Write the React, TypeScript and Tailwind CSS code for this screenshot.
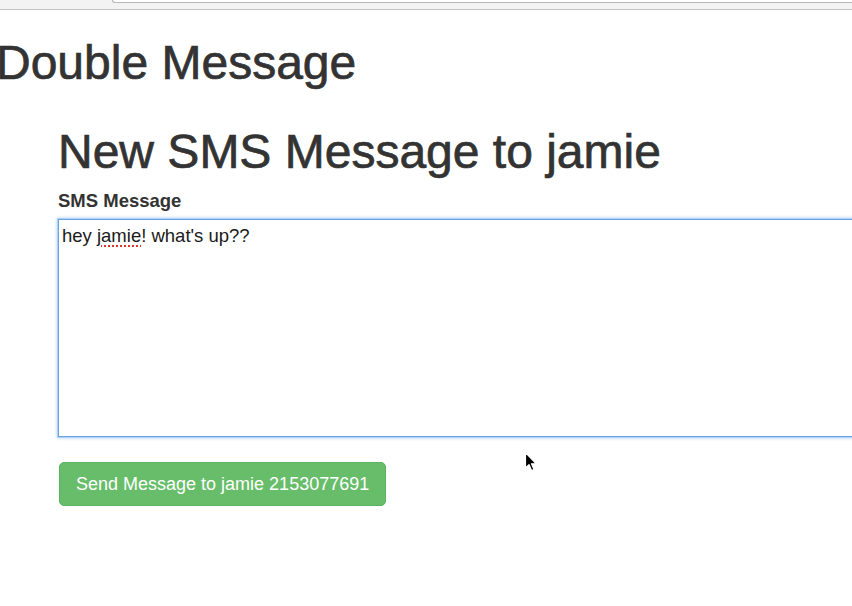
export default function App() {
  return (
    <div className="relative h-[606px] w-[852px] overflow-hidden bg-white font-['Liberation_Sans',Arial,sans-serif] text-[#333]">
      {/* browser chrome strip */}
      <div className="relative h-[10px] border-b border-[#c2c2c2] bg-[#f3f3f3]">
        <div className="ml-[112px] h-[3px] rounded-bl-[3px] border-b border-l border-[#b8b8b8] bg-white" />
      </div>

      <h1 className="ml-[-4px] mt-[26px] text-[48px] leading-[53px] font-normal [-webkit-text-stroke:0.7px_#333]">
        Double Message
      </h1>

      <div className="pl-[58px]">
        <h2 className="mt-[36px] text-[48px] leading-[53px] font-normal [-webkit-text-stroke:0.7px_#333]">
          New SMS Message to jamie
        </h2>

        <label className="mt-[10px] block text-[18.5px] leading-[26px] font-bold">SMS Message</label>

        <div
          role="textbox"
          className="mt-[5px] h-[218px] w-[820px] border border-[#6aa2e4] pl-[3px] pt-[5px] text-[18.5px] leading-[21px] text-[#1a1a1a] shadow-[0_0_0_1px_#b3d1f5,0_0_3px_1px_rgba(120,170,235,0.6)]"
        >
          hey{" "}
          <span className="underline decoration-dotted decoration-[#e0312f] decoration-2 underline-offset-[3px]">jamie</span>
          ! what's up??
        </div>

        <button
          type="button"
          className="mt-[25px] ml-px rounded-[5px] border border-[#5cb35e] bg-[#67bd69] px-[16px] py-[8px] text-[18px] leading-[26px] text-white"
        >
          Send Message to jamie 2153077691
        </button>
      </div>

      {/* mouse pointer */}
      <svg className="absolute left-[524px] top-[451px]" width="14" height="22" viewBox="0 0 14 22">
        <path d="M1.5 1.5 L1.5 17 L5 13.6 L7.6 19.6 L10 18.6 L7.5 12.8 L12.2 12.8 Z" fill="#000" stroke="#fff" strokeWidth="1.2" strokeLinejoin="round" />
      </svg>
    </div>
  );
}
